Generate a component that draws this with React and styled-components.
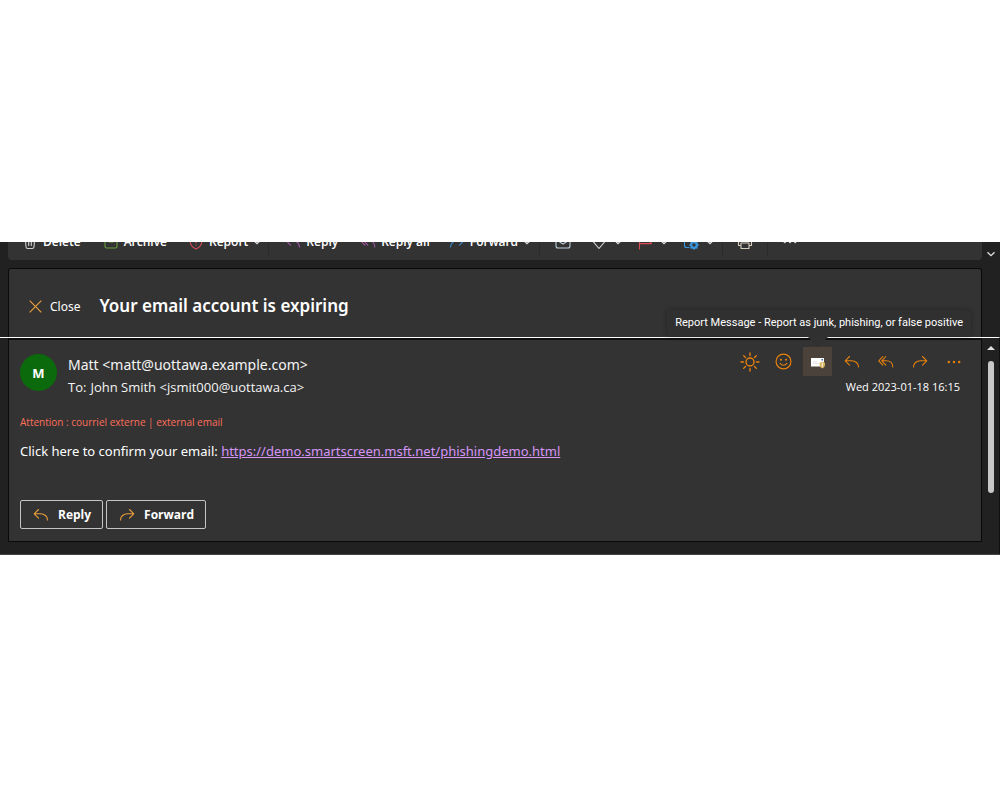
import styled, { createGlobalStyle, css } from 'styled-components'

const GlobalStyle = createGlobalStyle`
    * {
        box-sizing: border-box;
    }

    body {
        margin: 0;
        background-color: white;
        font-family: 'Open Sans', 'Noto Sans', sans-serif;
        font-size: 12px;
        color: white;
    }

    button {
        font-family: inherit;
        color: inherit;
        background: none;
        border: none;
        padding: 0;
        cursor: pointer;
    }
`

const Page = styled.div`
    padding: 242px 0;
`

const Window = styled.main`
    background-color: #212121;
    border-bottom: 1px solid #454545;
`

const Pane = styled.div`
    display: grid;
    grid-template-columns: minmax(0, 1fr) 18px;
    padding-left: 8px;
    ${(props) =>
        props.$lower &&
        css`
            border-top: 1px solid white;
            border-right: 1px solid #101010;
            padding-bottom: 12px;
            grid-template-columns: minmax(0, 1fr) 17px;
        `}
`

const ToolbarClip = styled.div`
    height: 18px;
    display: flex;
    align-items: flex-end;
    overflow: hidden;
    border-radius: 0 0 4px 4px;
`

const Toolbar = styled.div`
    flex: 1;
    height: 36px;
    display: flex;
    align-items: center;
    background-color: #333;
    padding-left: 14px;
`

const Tool = styled.button`
    display: flex;
    align-items: center;
    gap: ${(props) => (props.$iconOnly ? 7 : 5)}px;
    font-size: 12px;
    line-height: 16px;
    font-weight: 600;
    white-space: nowrap;
    margin-right: ${(props) => props.$after || 0}px;
`

const Divider = styled.span`
    width: 1px;
    height: 26px;
    background-color: #2a2a2a;
    margin-right: ${(props) => props.$after}px;
`

const Card = styled.section`
    background-color: #333;
    border: 1px solid #0a0a0a;
    ${(props) =>
        props.$lower
            ? css`
                  border-top: 2px solid #0f0f0f;
                  padding: 7px 13px 12px 11px;
              `
            : css`
                  margin-top: 8px;
                  border-bottom: none;
                  border-radius: 3px 3px 0 0;
              `}
`

const SubjectBar = styled.header`
    height: 68px;
    display: flex;
    align-items: center;
    gap: 19px;
    padding: 6px 20px 0;
`

const CloseBtn = styled.button`
    display: flex;
    align-items: center;
    gap: 8px;
    font-family: 'Noto Sans', sans-serif;
    font-size: 12px;
`

const Subject = styled.h1`
    margin: 0;
    font-family: 'Noto Sans', sans-serif;
    font-size: 17px;
    line-height: 24px;
    font-weight: 600;
`

const Rail = styled.div`
    display: flex;
    flex-direction: column;
    align-items: center;
    padding-top: ${(props) => props.$top}px;
`

const Thumb = styled.div`
    width: 6px;
    height: 132px;
    margin-top: 11px;
    border-radius: 3px;
    background-color: #c8c8c8;
`

const MessageHeader = styled.div`
    display: flex;
    align-items: flex-start;
`

const Avatar = styled.div`
    width: 37px;
    height: 37px;
    margin-top: 7px;
    margin-right: 11px;
    border-radius: 50%;
    background-color: #0b6a0b;
    display: flex;
    justify-content: center;
    align-items: center;
    font-size: 13px;
    font-weight: 700;
`

const People = styled.div`
    flex: 1;
    padding-top: 8px;
    color: #f4f4f4;
`

const Sender = styled.div`
    font-family: 'Noto Sans', sans-serif;
    font-size: 14px;
    line-height: 20px;
`

const Recipient = styled.div`
    font-size: 13px;
    line-height: 24px;
`

const RecipientLabel = styled.span`
    margin-right: 4px;
`

const HeaderSide = styled.div`
    display: flex;
    flex-direction: column;
    align-items: flex-end;
`

const Actions = styled.div`
    display: flex;
    gap: 5px;
`

const ActionBtn = styled.button`
    position: relative;
    width: 29px;
    height: 29px;
    display: flex;
    justify-content: center;
    align-items: center;
    color: #e8820c;
    background-color: ${(props) => (props.$active ? '#4a423b' : 'transparent')};
`

const Tooltip = styled.span`
    position: absolute;
    right: -139px;
    bottom: 40px;
    width: max-content;
    padding: 5px 8px;
    border-radius: 2px;
    background-color: #303030;
    box-shadow: 0 0 5px rgba(0, 0, 0, 0.3);
    color: white;
    font-family: Roboto, sans-serif;
    font-size: 11px;
    line-height: 16px;

    &::after {
        content: '';
        position: absolute;
        right: 141px;
        bottom: -11px;
        border: 12px solid transparent;
        border-bottom: none;
        border-top-color: #303030;
    }
`

const Sent = styled.time`
    font-size: 11px;
    line-height: 16px;
    margin: 3px 8px 0 0;
`

const Warning = styled.p`
    margin: 14px 0 0;
    font-size: 10px;
    line-height: 18px;
    font-weight: 500;
    color: #ff6f5c;
`

const Body = styled.p`
    margin: 10px 0 39px;
    font-family: 'Noto Sans', sans-serif;
    font-size: 13px;
    line-height: 20px;
`

const BodyLink = styled.a`
    color: #d795f8;
`

const Replies = styled.div`
    display: flex;
    gap: 3px;
`

const ReplyBtn = styled.button`
    && {
        height: 29px;
        display: flex;
        align-items: center;
        gap: 9px;
        padding: 0 11px 0 12px;
        border: 1px solid #c4c4c4;
        border-radius: 2px;
        font-size: 12px;
        font-weight: 700;
    }

    svg {
        color: #eb9d3b;
    }
`

const Svg = ({ size = 16, color = 'currentColor', children }) => (
    <svg
        width={size}
        height={size}
        viewBox='0 0 16 16'
        fill='none'
        stroke={color}
        strokeWidth='1.1'
        strokeLinecap='round'
        strokeLinejoin='round'
        aria-hidden='true'
    >
        {children}
    </svg>
)

const ReplyIcon = (props) => (
    <Svg {...props}>
        <path d='M5.500 2.500 1.200 6.800l4.300 4.300M1.200 6.800h6.300c4 0 7 2.500 7 6.200' />
    </Svg>
)

const ReplyAllIcon = (props) => (
    <Svg {...props}>
        <path d='M4.800 2.500.8 6.800l4 4.300M7.800 2.500 3.800 6.800l4 4.300M3.800 6.800h4.500c3.800 0 6.500 2.500 6.500 6.200' />
    </Svg>
)

const ForwardIcon = (props) => (
    <Svg {...props}>
        <path d='M10.500 2.500l4.300 4.300-4.300 4.300M14.800 6.800H8.500c-4 0-7 2.500-7 6.200' />
    </Svg>
)

const Chevron = ({ size = 8 }) => (
    <svg width={size} height={size} viewBox='0 0 8 8' fill='none' stroke='#e0e0e0' strokeWidth='1.3' aria-hidden='true'>
        <path d='M0.500 2.300 4 5.700 7.500 2.300' />
    </svg>
)

const TrashIcon = () => (
    <Svg color='#d0d0d0'>
        <path d='M2 3.500h12M6 3.500a2 2 0 0 1 4 0M3.200 3.500l.8 9.300q.1 1.700 1.800 1.700h4.400q1.700 0 1.800-1.700l.8-9.300M6.700 6.500v5M9.300 6.500v5' />
    </Svg>
)

const ArchiveIcon = () => (
    <Svg color='#6a9c3a'>
        <path d='M1.500 2h13v3h-13zM2 5v7.500q0 1.500 1.500 1.500h9q1.500 0 1.500-1.500V5M6 8h4' />
    </Svg>
)

const ShieldIcon = () => (
    <Svg color='#dc4c58'>
        <path d='M8 1.500q2.500 2 5.800 2v4q0 5-5.800 7.500-5.800-2.500-5.800-7.500v-4q3.300 0 5.800-2zM8 5v4M8 11v.2' />
    </Svg>
)

const MailIcon = () => (
    <Svg color='#b9cdd8'>
        <path d='M1 4.500v7.500q0 2 2 2h10q2 0 2-2V4.500q0-2-2-2H3q-2 0-2 2zM1.500 6 8 10l6.500-4' />
    </Svg>
)

const TagIcon = () => (
    <Svg color='#d0d0d0'>
        <path d='M3 1.500h10l1.800 5L8 14.500l-6.800-8z' />
    </Svg>
)

const FlagIcon = () => (
    <Svg color='#dc4c58'>
        <path d='M2.500 15V1.500h12L11.500 5.700l3 3.900h-12' />
    </Svg>
)

const RulesIcon = () => (
    <Svg color='#3a96dd'>
        <path d='M6 13.500H3.500q-2 0-2-2v-7q0-2 2-2h8q2 0 2 2V6' />
        <circle cx='11' cy='11' r='2.800' strokeWidth='2.200' />
        <path
            d='M11 6.800v1.500M11 13.700v1.500M6.800 11h1.500M13.700 11h1.500M8 8l1 1M13 13l1 1M14 8l-1 1M9 13l-1 1'
            strokeWidth='1.400'
        />
    </Svg>
)

const PrintIcon = () => (
    <Svg color='#d5cdbd'>
        <path d='M4 11.500H1.500V6q0-1.500 1.500-1.500h10q1.500 0 1.500 1.500v5.500H12M4 4.500v-3h8v3M4 9h8v5.500H4z' />
    </Svg>
)

const DotsIcon = (props) => (
    <Svg {...props}>
        <g fill={props.color || 'currentColor'} stroke='none'>
            <circle cx='2.800' cy='8' r='1.200' />
            <circle cx='8' cy='8' r='1.200' />
            <circle cx='13.200' cy='8' r='1.200' />
        </g>
    </Svg>
)

const SunIcon = () => (
    <Svg size={20}>
        <circle cx='8' cy='8' r='3.200' />
        <path d='M8 .8v2M8 13.200v2M.8 8h2M13.200 8h2M2.900 2.900l1.500 1.500M11.600 11.600l1.500 1.500M13.100 2.900l-1.500 1.500M4.400 11.600l-1.500 1.500' />
    </Svg>
)

const SmileIcon = () => (
    <Svg size={17}>
        <circle cx='8' cy='8' r='7' />
        <path d='M4.800 9.800q3.200 3.400 6.400 0' />
        <g fill='currentColor' stroke='none'>
            <circle cx='5.600' cy='6.300' r='1' />
            <circle cx='10.400' cy='6.300' r='1' />
        </g>
    </Svg>
)

const ReportIcon = () => (
    <Svg>
        <path d='M1 4h13v8.500H1z' fill='#fff' stroke='none' />
        <path d='M3 9.500h5M3 7.700h4' stroke='#d8d8d8' strokeWidth='0.700' />
        <path d='M11.500 5h1.500v1.500h-1.500z' fill='#2b6cb8' stroke='none' />
        <path d='M12.300 7.700l2.700 1v2.300q0 2.200-2.700 3.500-2.700-1.300-2.700-3.500V8.700z' fill='#d9b65f' stroke='none' />
        <path d='M12.300 9.400v2.200M12.300 12.800v.2' stroke='#fff' strokeWidth='0.900' />
    </Svg>
)

const CloseIcon = () => (
    <svg width='13' height='13' viewBox='0 0 13 13' stroke='#eb9d3b' strokeWidth='1.2' aria-hidden='true'>
        <path d='M.7.7l11.600 11.600M12.300.7.7 12.300' />
    </svg>
)

export default function App() {
    return (
        <Page>
            <GlobalStyle />
            <Window>
                <Pane>
                    <div>
                        <ToolbarClip>
                            <Toolbar>
                                <Tool $after={22}>
                                    <TrashIcon /> Delete
                                </Tool>
                                <Tool $after={21}>
                                    <ArchiveIcon /> Archive
                                </Tool>
                                <Tool $after={7}>
                                    <ShieldIcon /> Report <Chevron />
                                </Tool>
                                <Divider $after={16} />
                                <Tool $after={22}>
                                    <ReplyIcon color='#a357a8' /> Reply
                                </Tool>
                                <Tool $after={19}>
                                    <ReplyAllIcon color='#a357a8' /> Reply all
                                </Tool>
                                <Tool $after={8}>
                                    <ForwardIcon color='#3a86d0' /> Forward <Chevron />
                                </Tool>
                                <Divider $after={15} />
                                <Tool $after={20} aria-label='Mark as read'>
                                    <MailIcon />
                                </Tool>
                                <Tool $iconOnly $after={15} aria-label='Categorize'>
                                    <TagIcon /> <Chevron />
                                </Tool>
                                <Tool $iconOnly $after={15} aria-label='Flag'>
                                    <FlagIcon /> <Chevron />
                                </Tool>
                                <Tool $iconOnly $after={8} aria-label='Rules'>
                                    <RulesIcon /> <Chevron />
                                </Tool>
                                <Divider $after={14} />
                                <Tool $after={14} aria-label='Print'>
                                    <PrintIcon />
                                </Tool>
                                <Divider $after={14} />
                                <Tool aria-label='More options'>
                                    <DotsIcon color='#d0d0d0' />
                                </Tool>
                            </Toolbar>
                        </ToolbarClip>
                        <Card>
                            <SubjectBar>
                                <CloseBtn>
                                    <CloseIcon /> Close
                                </CloseBtn>
                                <Subject>Your email account is expiring</Subject>
                            </SubjectBar>
                        </Card>
                    </div>
                    <Rail $top={8}>
                        <Chevron />
                    </Rail>
                </Pane>
                <Pane $lower>
                    <Card $lower>
                        <MessageHeader>
                            <Avatar>M</Avatar>
                            <People>
                                <Sender>Matt &lt;matt@uottawa.example.com&gt;</Sender>
                                <Recipient>
                                    <RecipientLabel>To:</RecipientLabel>
                                    John Smith &lt;jsmit000@uottawa.ca&gt;
                                </Recipient>
                            </People>
                            <HeaderSide>
                                <Actions>
                                    <ActionBtn aria-label='Light mode'>
                                        <SunIcon />
                                    </ActionBtn>
                                    <ActionBtn aria-label='React'>
                                        <SmileIcon />
                                    </ActionBtn>
                                    <ActionBtn $active>
                                        <ReportIcon />
                                        <Tooltip role='tooltip'>
                                            Report Message - Report as junk, phishing, or false positive
                                        </Tooltip>
                                    </ActionBtn>
                                    <ActionBtn aria-label='Reply'>
                                        <ReplyIcon />
                                    </ActionBtn>
                                    <ActionBtn aria-label='Reply all'>
                                        <ReplyAllIcon />
                                    </ActionBtn>
                                    <ActionBtn aria-label='Forward'>
                                        <ForwardIcon />
                                    </ActionBtn>
                                    <ActionBtn aria-label='More actions'>
                                        <DotsIcon />
                                    </ActionBtn>
                                </Actions>
                                <Sent dateTime='2023-01-18T16:15'>Wed 2023-01-18 16:15</Sent>
                            </HeaderSide>
                        </MessageHeader>
                        <Warning>Attention : courriel externe | external email</Warning>
                        <Body>
                            Click here to confirm your email:{' '}
                            <BodyLink href='https://demo.smartscreen.msft.net/phishingdemo.html'>
                                https://demo.smartscreen.msft.net/phishingdemo.html
                            </BodyLink>
                        </Body>
                        <Replies>
                            <ReplyBtn>
                                <ReplyIcon /> Reply
                            </ReplyBtn>
                            <ReplyBtn>
                                <ForwardIcon /> Forward
                            </ReplyBtn>
                        </Replies>
                    </Card>
                    <Rail $top={8}>
                        <svg width='8' height='4' viewBox='0 0 8 4' fill='#e0e0e0' aria-hidden='true'>
                            <path d='M4 0 8 4H0z' />
                        </svg>
                        <Thumb />
                    </Rail>
                </Pane>
            </Window>
        </Page>
    )
}
